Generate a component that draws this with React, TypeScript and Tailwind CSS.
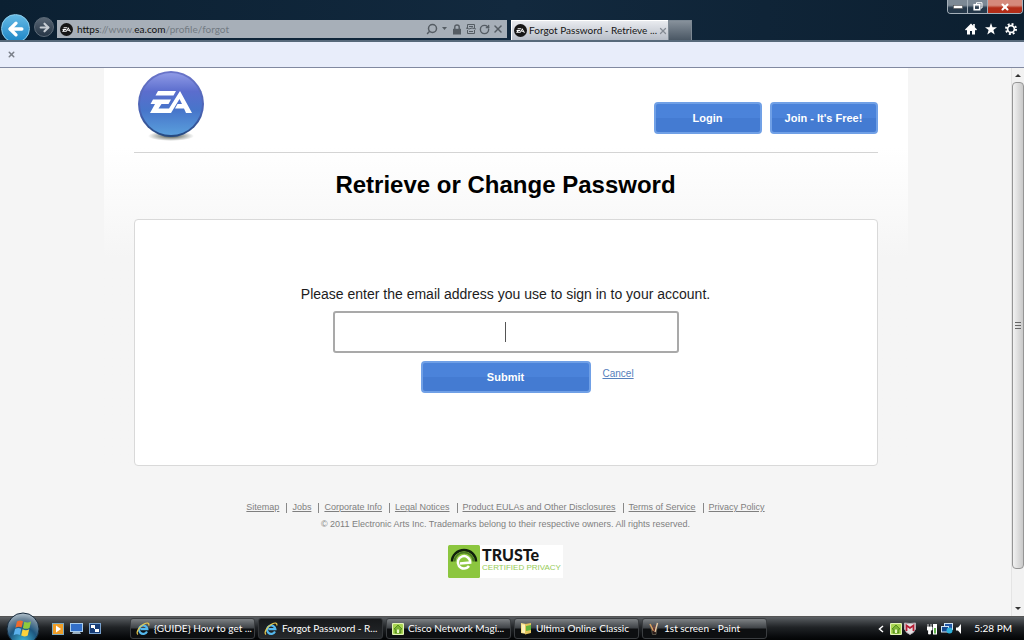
import type { ReactNode } from "react";
import { ArrowLeft, ArrowRight, RotateCw, Search, X } from "lucide-react";

const footerLinks = [
  "Sitemap",
  "Jobs",
  "Corporate Info",
  "Legal Notices",
  "Product EULAs and Other Disclosures",
  "Terms of Service",
  "Privacy Policy",
];

function EaLetters({ className }: { className: string }) {
  return (
    <svg viewBox="0 0 44 22" className={className} fill="currentColor" aria-hidden="true">
      <path d="M9 0H27L24.5 4.5H6.5Z" />
      <path d="M4 8.500H22L19.500 13H12.500L9.500 17.500H20L31 0L44 22H38L36 17.500H26L28.500 13H33.500L30.500 8L22 22H0L6 13H1.500Z" />
    </svg>
  );
}

function EaBadge() {
  return (
    <span className="flex size-[13px] shrink-0 items-center justify-center rounded-full bg-[#161616] text-white">
      <EaLetters className="h-[5px] w-[9px]" />
    </span>
  );
}

function EaLogo() {
  return (
    <svg viewBox="0 0 68 72" className="h-[72px] w-[68px]" role="img" aria-label="EA">
      <defs>
        <linearGradient id="ball" x1="0" y1="0" x2="0" y2="1">
          <stop offset="0" stopColor="#8f9ae6" />
          <stop offset="0.3" stopColor="#5b6dcd" />
          <stop offset="0.6" stopColor="#4775ca" />
          <stop offset="1" stopColor="#5a9fdc" />
        </linearGradient>
        <linearGradient id="rim" x1="0" y1="0" x2="0" y2="1">
          <stop offset="0" stopColor="#6a74c9" />
          <stop offset="0.6" stopColor="#4a63b4" />
          <stop offset="1" stopColor="#24497f" />
        </linearGradient>
        <radialGradient id="shade">
          <stop offset="0" stopColor="#303a30" stopOpacity="0.9" />
          <stop offset="1" stopColor="#303a30" stopOpacity="0" />
        </radialGradient>
      </defs>
      <ellipse cx="34" cy="66" rx="23" ry="5" fill="url(#shade)" />
      <circle cx="34" cy="34" r="33" fill="url(#rim)" />
      <circle cx="34" cy="34" r="31" fill="url(#ball)" />
      <g fill="#fff" transform="translate(12 21)">
        <path d="M9 0H27L24.500 4.500H6.500Z" />
        <path d="M4 8.500H22L19.500 13H12.500L9.500 17.500H20L31 0L43 22H37L35 17.500H26L28.500 13H33L30.500 8L22 22H1L6 13H1.500Z" />
      </g>
    </svg>
  );
}

function IeIcon() {
  return (
    <svg viewBox="0 0 14 14" className="size-[14px] shrink-0" fill="none" aria-hidden="true">
      <path d="M11 9.500A4.200 4.200 0 1 1 11.400 7.200H4.500" stroke="#55b9ee" strokeWidth="2.200" />
      <path d="M2 12.500C-.5 11 3 4.500 8 2C11 .5 13.500.5 12.700 3.500" stroke="#e9c94b" strokeWidth="1.200" />
    </svg>
  );
}

function HouseIcon({ className }: { className: string }) {
  return (
    <svg viewBox="0 0 12 12" className={className} aria-hidden="true">
      <rect width="12" height="12" rx="1" fill="#e2f4b8" />
      <rect x="1" y="1" width="10" height="10" rx="1" fill="#a9d552" />
      <path d="M6 2L2 6H3.200V10H8.800V6H10Z" fill="#7db535" stroke="#47801a" strokeWidth="0.800" />
      <rect x="5" y="6.500" width="2" height="3.500" fill="#e8f7c5" />
    </svg>
  );
}

function FolderIcon() {
  return (
    <svg viewBox="0 0 12 13" className="h-[13px] w-3 shrink-0" aria-hidden="true">
      <path d="M1 1L6 2V12L1 11Z" fill="#f6e08a" />
      <path d="M5 2L11 1V11L5 12.500Z" fill="#e4c45c" />
      <path d="M6 4L11 3V8L6 9Z" fill="#62b33c" />
      <path d="M2 2.500L5 3V11L2 10.500Z" fill="#fdf3b8" />
    </svg>
  );
}

function PaintIcon() {
  return (
    <svg viewBox="0 0 12 13" className="h-[13px] w-3 shrink-0" aria-hidden="true">
      <path d="M3 6H9L8 12.500H4.500Z" fill="#2b1b18" stroke="#776" strokeWidth="0.600" />
      <path d="M2 2L5.500 9" stroke="#d8a05f" strokeWidth="1.500" />
      <path d="M9.500 1L7 10" stroke="#e9c9a0" strokeWidth="1.400" />
      <path d="M6 3V9" stroke="#8b4038" strokeWidth="1" />
    </svg>
  );
}

function StartOrb() {
  return (
    <svg viewBox="0 0 34 28" className="h-7 w-[34px]" aria-hidden="true">
      <defs>
        <radialGradient id="orb" cx="0.5" cy="0.9" r="0.9">
          <stop offset="0" stopColor="#3fb7d8" />
          <stop offset="0.5" stopColor="#1d567f" />
          <stop offset="0.8" stopColor="#71899c" />
          <stop offset="1" stopColor="#b4c4cf" />
        </radialGradient>
      </defs>
      <circle cx="17" cy="17" r="16" fill="url(#orb)" stroke="#15283a" strokeWidth="1" />
      <path d="M11 9.500Q14 7.500 17 9.200L15.600 15.500Q12.500 14 9.400 15.800Z" fill="#ef6a2c" />
      <path d="M18.300 9.800Q21.500 11.500 25 9.500L23.500 16Q20.300 17.700 16.900 16Z" fill="#8fca3d" />
      <path d="M9 17Q12.200 15.200 15.300 16.800L13.800 23Q10.800 21.500 7.600 23.200Z" fill="#5bb1ec" />
      <path d="M16.600 17.300Q20 19 23.200 17.300L21.700 23.500Q18.500 25.300 15.200 23.600Z" fill="#fbd23c" />
    </svg>
  );
}

const tasks: { title: string; icon: ReactNode; active?: boolean }[] = [
  { title: "{GUIDE} How to get ...", icon: <IeIcon /> },
  { title: "Forgot Password - R...", icon: <IeIcon />, active: true },
  { title: "Cisco Network Magi...", icon: <HouseIcon className="size-3 shrink-0" /> },
  { title: "Ultima Online Classic", icon: <FolderIcon /> },
  { title: "1st screen - Paint", icon: <PaintIcon /> },
];

function WindowButtons() {
  return (
    <div className="flex h-[14px] overflow-hidden rounded-b border border-t-0 border-[#a5b0ba]">
      <button aria-label="Minimize" className="flex w-5 items-center justify-center border-r border-[#a5b0ba] bg-linear-to-b from-[#7c8995] from-40% to-[#25384a] to-60%">
        <svg viewBox="0 0 10 4" className="h-1 w-[10px]"><rect x="0.500" y="0.500" width="9" height="3" fill="#fff" stroke="#444" strokeWidth="0.500" /></svg>
      </button>
      <button aria-label="Restore" className="flex w-5 items-center justify-center border-r border-[#a5b0ba] bg-linear-to-b from-[#7c8995] from-40% to-[#25384a] to-60%">
        <svg viewBox="0 0 10 9" className="h-[9px] w-[10px]" fill="none" stroke="#fff">
          <path d="M3.500 2V.7H9V6H7.500" strokeWidth="1" />
          <rect x="1.200" y="2.700" width="5.500" height="5" strokeWidth="1.600" />
        </svg>
      </button>
      <button aria-label="Close window" className="flex w-[34px] items-center justify-center bg-linear-to-b from-[#d58a7c] from-40% to-[#b32d18] to-60% text-white">
        <X className="size-[10px]" strokeWidth={5} />
      </button>
    </div>
  );
}

function BrowserBar() {
  return (
    <header className="relative flex h-[42px] shrink-0 items-end border-b-2 border-[#57697a] bg-linear-to-r from-[#0b2032] via-[#12293e] to-[#0c1f30] pr-[7px] pl-px">
      <div className="absolute top-0 right-px"><WindowButtons /></div>
      <div className="flex h-[26px] shrink-0 items-start gap-1 overflow-hidden">
        <button aria-label="Back" className="flex size-[29px] items-center justify-center rounded-full border border-[#8fd0ee] bg-linear-to-b from-[#63b9e4] to-[#1686c6] text-white">
          <ArrowLeft className="size-[20px]" strokeWidth={4} />
        </button>
        <button aria-label="Forward" className="mt-[3px] flex size-5 items-center justify-center rounded-full border border-[#5d6b78] bg-linear-to-b from-[#596674] to-[#263646] text-[#c6ccd2]">
          <ArrowRight className="size-[13px]" strokeWidth={4} />
        </button>
      </div>
      <div className="mb-[2px] ml-[3px] flex h-[18px] w-[450px] shrink-0 items-center bg-[#a7afb8] px-[3px] text-[#555c63]">
        <EaBadge />
        <div role="textbox" aria-label="Address" className="ml-1 grow whitespace-nowrap text-[10px] leading-4 text-[#737b83]">
          <span className="text-[#111]">https</span>://www.<span className="text-[#111]">ea.com</span>/profile/forgot
        </div>
        <div className="flex items-center gap-[2px]">
          <Search className="size-3 -scale-x-100" strokeWidth={3} />
          <svg viewBox="0 0 9 4" className="h-1 w-[9px]"><path d="M2 0H7L4.500 3Z" fill="currentColor" /></svg>
          <svg viewBox="0 0 10 11" className="mx-px h-[11px] w-[10px]"><path d="M2.800 5V3Q2.800 1 5 1T7.200 3V5" fill="none" stroke="currentColor" strokeWidth="1.400" /><rect x="1" y="4.800" width="8" height="5.700" fill="currentColor" /></svg>
          <svg viewBox="0 0 12 12" className="size-3" fill="none" stroke="currentColor">
            <path d="M2.500 5V1.500H9.500V5M2.500 7V10.500H9.500V7M1 5L4 6L7 5L11 6M4 3.500H8M4 8.500H8" />
          </svg>
          <RotateCw className="size-[11px]" strokeWidth={3} />
          <X className="size-3" strokeWidth={3} />
        </div>
      </div>
      <div className="ml-1 flex h-[20px] w-[157px] shrink-0 items-center border-t border-l border-white bg-linear-to-b from-[#e9ebef] to-[#b8bec8] pl-[2px]">
        <EaBadge />
        <span className="ml-[2px] grow whitespace-nowrap text-[10px] text-[#151515]">Forgot Password - Retrieve ...</span>
        <button aria-label="Close tab"><X className="size-[10px] text-[#858b94]" strokeWidth={3} /></button>
      </div>
      <button aria-label="New tab" className="h-[20px] w-6 border border-b-0 border-[#7d8994] bg-linear-to-b from-[#87919b] to-[#4a5764]" />
      <nav className="mb-[5px] ml-auto flex items-center gap-2 text-white">
        <button aria-label="Home">
          <svg viewBox="0 0 12 12" className="size-3" fill="currentColor"><path d="M6 .5L0 6.500L1 7.500L2 6.700V11.500H5V8H7V11.500H10V6.700L11 7.500L12 6.500L9.800 4.300V1H8.200V2.700Z" /></svg>
        </button>
        <button aria-label="Favorites">
          <svg viewBox="0 0 12 12" className="size-3" fill="currentColor"><path d="M6 0L7.500 4.200H12L8.400 7L9.700 11.500L6 8.900L2.300 11.500L3.600 7L0 4.200H4.500Z" /></svg>
        </button>
        <button aria-label="Tools">
          <svg viewBox="0 0 12 12" className="size-3" fill="none" stroke="currentColor">
            <circle cx="6" cy="6" r="3.400" strokeWidth="1.700" />
            <circle cx="6" cy="6" r="5" strokeWidth="2" strokeDasharray="1.960 1.967" />
          </svg>
        </button>
      </nav>
    </header>
  );
}

const blueButton =
  "flex h-8 items-center justify-center rounded border-2 border-[#70a0e6] bg-linear-to-b from-[#4b83da] from-50% to-[#447bd2] to-50% text-[11px] leading-4 font-bold text-white";

function TrusteSeal() {
  return (
    <a href="#truste" className="flex h-[33px] items-center bg-white">
      <svg viewBox="0 0 32 33" className="h-[33px] w-8" fill="none" aria-hidden="true">
        <rect width="32" height="33" rx="1.500" fill="#8cc63f" />
        <path d="M4 16.500A12 11.500 0 0 1 28 16.500" stroke="#10210c" strokeWidth="2.500" />
        <path d="M6.500 16.500A9.500 9 0 0 1 25.500 16.500" stroke="#4d7b25" strokeWidth="2" />
        <path d="M21 21A6.200 6.200 0 1 1 22.200 17.500L12 18.500" stroke="#fff" strokeWidth="2.500" />
      </svg>
      <span className="flex flex-col px-[2px] pb-1">
        <span className="text-[16px] leading-4 font-black text-[#161616] [font-family:Lato,sans-serif]">TRUSTe</span>
        <span className="text-[8px] leading-[9px] text-[#97cc58]">CERTIFIED PRIVACY</span>
      </span>
    </a>
  );
}

function Page() {
  return (
    <main className="min-w-0 grow overflow-hidden bg-[#f5f5f5] font-['Liberation_Sans',Arial,sans-serif]">
      <div className="mx-auto max-w-[804px] bg-linear-to-b from-white from-[80px] to-[#f5f5f5] to-[190px] px-[30px]">
        <header className="flex h-[85px] items-start justify-between border-b border-[#d4d4d4] pt-[2px]">
          <a href="#home" className="ml-[3px]"><EaLogo /></a>
          <div className="mt-8 flex gap-2">
            <button className={`${blueButton} w-[108px]`}>Login</button>
            <button className={`${blueButton} w-[108px]`}>Join - It's Free!</button>
          </div>
        </header>
        <h1 className="pt-4 pb-[18px] text-center text-[24px] leading-8 font-bold text-black">Retrieve or Change Password</h1>
        <form className="flex h-[247px] flex-col items-center rounded border border-[#d9d9d9] bg-white pt-[66px]" onSubmit={(e) => e.preventDefault()}>
          <label htmlFor="email" className="text-[14px] leading-4 text-[#1c1c1c]">
            Please enter the email address you use to sign in to your account.
          </label>
          <div className="relative mt-[9px] w-full max-w-[346px]">
            <input id="email" type="email" className="h-[42px] w-full rounded-[3px] border-2 border-[#a9a9a9] bg-white px-2 text-center text-[14px] caret-[#555] outline-none" />
            <span className="pointer-events-none absolute inset-0 m-auto h-5 w-px bg-[#555]" aria-hidden="true" />
          </div>
          <div className="mt-2 grid w-full grid-cols-[1fr_auto_1fr] gap-3">
            <button type="submit" className={`${blueButton} col-start-2 w-[170px]`}>Submit</button>
            <a href="#cancel" className="mt-[5px] self-start justify-self-start text-[10px] leading-4 text-[#5580bd] underline">Cancel</a>
          </div>
        </form>
      </div>
      <footer className="flex flex-col items-center pt-[34px] text-[9px] text-[#7f7f7f]">
        <nav className="flex h-4 items-center">
          {footerLinks.map((text, i) => (
            <span key={text} className="flex items-center">
              {i > 0 && <span className="mr-[5px] ml-[7px] h-[10px] w-px bg-[#888]" />}
              <a href="#footer" className="underline">{text}</a>
            </span>
          ))}
        </nav>
        <p className="mb-3 leading-[17px]">© 2011 Electronic Arts Inc. Trademarks belong to their respective owners. All rights reserved.</p>
        <TrusteSeal />
      </footer>
    </main>
  );
}

function Scrollbar() {
  return (
    <div className="flex w-[13px] shrink-0 flex-col items-center border-l border-[#e4e4e4] bg-[#f2f2f2]" aria-hidden="true">
      <svg viewBox="0 0 8 4" className="my-[5px] h-1 w-2"><path d="M1 4H7L4 1Z" fill="#333" /></svg>
      <div className="flex h-[487px] w-full shrink items-center justify-center rounded-sm border border-[#959595] bg-linear-to-r from-[#f2f2f2] to-[#c9c9c9]">
        <svg viewBox="0 0 6 7" className="h-[7px] w-[6px]" stroke="#666"><path d="M0 .5H6M0 3.500H6M0 6.500H6" /></svg>
      </div>
      <svg viewBox="0 0 8 4" className="mt-auto mb-[5px] h-1 w-2"><path d="M1 0H7L4 3Z" fill="#333" /></svg>
    </div>
  );
}

function Taskbar() {
  return (
    <footer className="relative flex h-6 shrink-0 items-stretch border-t border-[#555] bg-linear-to-b from-[#5c6064] via-[#202326] via-45% to-[#030405] pr-3 text-[10px] text-white">
      <button aria-label="Start" className="absolute bottom-0 left-[6px]"><StartOrb /></button>
      <div className="ml-[52px] flex w-[78px] shrink-0 items-center gap-[6px]">
        <svg viewBox="0 0 12 12" className="size-3"><rect width="12" height="12" fill="#7ba9c0" /><rect x="1" y="1" width="10" height="10" fill="#ef9d27" /><path d="M4 2.500L9 6L4 9.500Z" fill="#fff" /></svg>
        <svg viewBox="0 0 13 11" className="h-[11px] w-[13px]"><rect width="13" height="9" fill="#a9cdec" /><rect x="1" y="1" width="11" height="7" fill="#326fc8" /><path d="M3 9H10L11 11H2Z" fill="#9ab0c0" /></svg>
        <svg viewBox="0 0 12 11" className="h-[11px] w-3"><rect width="12" height="11" fill="#79a2cf" /><rect x="1" y="1" width="10" height="9" fill="#173d77" /><path d="M2 2H6V5H2ZM6 6H10V9H6Z" fill="#fff" /><path d="M4 4L8 8" stroke="#fff" /></svg>
      </div>
      <div className="flex min-w-0 gap-[3px] py-px">
        {tasks.map((t) => (
          <button
            key={t.title}
            className={`flex w-[125px] items-center gap-1 rounded-[3px] border pl-[5px] ${
              t.active
                ? "border-[#34373a] bg-linear-to-b from-[#17191b] to-[#25282b]"
                : "border-[#3a3d40] bg-linear-to-b from-[#777b7e] from-5% via-[#42464a] via-45% to-[#0d0f11] to-55%"
            }`}
          >
            {t.icon}
            <span className="whitespace-nowrap">{t.title}</span>
          </button>
        ))}
      </div>
      <div className="ml-auto flex shrink-0 items-center">
        <svg viewBox="0 0 6 8" className="mr-[6px] h-2 w-[6px]" fill="none" stroke="#fff" strokeWidth="1.500"><path d="M5 1L1.500 4L5 7" /></svg>
        <HouseIcon className="mr-[2px] size-3" />
        <svg viewBox="0 0 12 13" className="mr-[11px] h-[13px] w-3"><path d="M.5 1Q6 2 11.500 1V7Q10 11 6 12.500Q2 11 .5 7Z" fill="#e5dfe2" stroke="#b8b0b8" /><path d="M2.500 9V3.500L6 6L9.500 3.500V9" fill="none" stroke="#b51e35" strokeWidth="1.800" /></svg>
        <svg viewBox="0 0 11 12" className="mr-[3px] h-3 w-[11px]"><path d="M1 1V5M4 1V5M0 4H5V7H3.500V11H1.500V7H0Z" fill="#fff" stroke="#fff" strokeWidth="0.800" /><rect x="6" y="1" width="4" height="10.500" fill="#fff" /><rect x="7" y="5" width="2" height="5.500" fill="#63b44c" /></svg>
        <svg viewBox="0 0 12 11" className="mr-[3px] h-[11px] w-3"><rect x="3.500" y="0.500" width="8" height="6" fill="#2458a4" stroke="#d2e5f5" /><rect x="0.500" y="3.500" width="7" height="5.500" fill="#174a90" stroke="#d2e5f5" /><circle cx="8.500" cy="7.500" r="3" fill="#2db2dc" /></svg>
        <svg viewBox="0 0 6 10" className="mr-3 h-[10px] w-[6px]"><path d="M0 3.500H2L5 0V10L2 6.500H0Z" fill="#fff" /></svg>
        <time>5:28 PM</time>
      </div>
    </footer>
  );
}

export default function App() {
  return (
    <div className="flex h-screen flex-col overflow-hidden font-[Lato,'Noto_Sans',sans-serif]">
      <BrowserBar />
      <div className="flex h-[26px] shrink-0 items-center border-b border-[#8189a0] bg-[#e8edfa] pl-[7px]">
        <button aria-label="Close bar" className="text-[#7a7f88]"><X className="size-[9px]" strokeWidth={4} /></button>
      </div>
      <div className="flex min-h-0 grow">
        <Page />
        <Scrollbar />
      </div>
      <Taskbar />
    </div>
  );
}
